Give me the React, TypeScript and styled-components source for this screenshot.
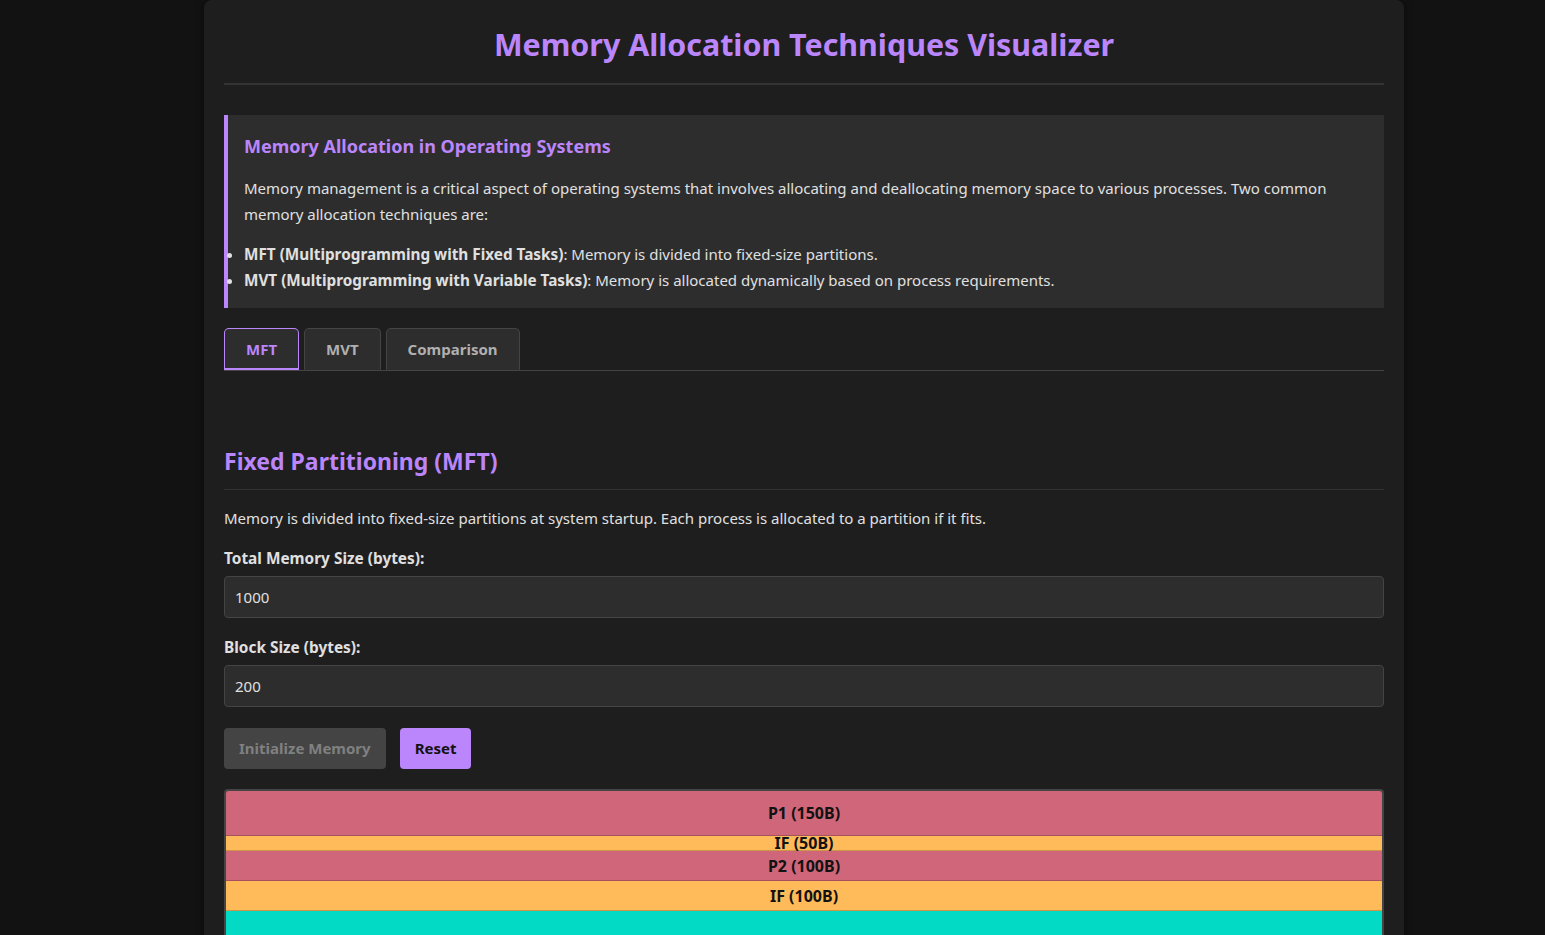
import React from "react";
import styled, { createGlobalStyle } from "styled-components";

const Global = createGlobalStyle`
  html, body { margin: 0; padding: 0; background: #121212; }
  body { font-family: "Noto Sans", "Open Sans", sans-serif; color: #e0e0e0; }
  * { box-sizing: border-box; }
`;

const Container = styled.div`
  width: 1200px;
  margin: 0 0 0 204px;
  padding: 20px;
  background: #1e1e1e;
  border-radius: 8px;
  box-shadow: 0 0 10px rgba(0, 0, 0, 0.4);
  min-height: 935px;
`;

const Title = styled.h1`
  margin: 0 0 30px;
  padding: 5px 0 18px;
  font-size: 30.4px;
  line-height: 40px;
  font-weight: 700;
  text-align: center;
  color: #bb86fc;
  border-bottom: 2px solid #333;
`;

const InfoBox = styled.div`
  background: #2d2d2d;
  border-left: 4px solid #bb86fc;
  padding: 20px 16px 15px;
`;

const InfoTitle = styled.h3`
  margin: 0 0 18px;
  font-size: 18px;
  line-height: 22px;
  font-weight: 700;
  color: #bb86fc;
`;

const Para = styled.p`
  margin: 0 0 14px;
  font-size: 15px;
  line-height: 26px;
  color: #e0e0e0;
`;

const List = styled.ul`
  margin: 0;
  padding: 0;
  font-size: 15px;
  line-height: 26px;

  strong {
    font-size: 15.3px;
  }
`;

const Tabs = styled.div`
  display: flex;
  gap: 5px;
  margin-top: 20px;
  border-bottom: 1px solid #444;
`;

const Tab = styled.button<{ $active?: boolean }>`
  font-family: inherit;
  font-size: 15px;
  font-weight: 700;
  line-height: 20px;
  padding: 10px 21px;
  background: #2d2d2d;
  color: ${(p) => (p.$active ? "#bb86fc" : "#b0b0b0")};
  border: 1px solid ${(p) => (p.$active ? "#bb86fc" : "#444")};
  border-bottom: ${(p) => (p.$active ? "2px solid #bb86fc" : "1px solid #2d2d2d")};
  border-radius: 5px 5px 0 0;
  height: 42px;
  cursor: pointer;
`;

const Section = styled.div`
  padding-top: 75px;
`;

const SectionTitle = styled.h2`
  margin: 0 0 17px;
  padding-bottom: 13px;
  font-size: 23px;
  line-height: 30px;
  font-weight: 700;
  color: #bb86fc;
  border-bottom: 1px solid #333;
`;

const Text = styled.p`
  margin: 0 0 18px;
  font-size: 15px;
  line-height: 22px;
`;

const Field = styled.div`
  display: flex;
  flex-direction: column;
  gap: 6px;
  margin-bottom: 18px;
`;

const Label = styled.label`
  padding-top: 1px;
  font-size: 15.4px;
  line-height: 22px;
  font-weight: 700;
  color: #e0e0e0;
`;

const Input = styled.input`
  width: 100%;
  height: 42px;
  padding: 10px;
  font-family: inherit;
  font-size: 15px;
  line-height: 20px;
  color: #e0e0e0;
  background: #2d2d2d;
  border: 1px solid #444;
  border-radius: 4px;
  outline: none;
`;

const Buttons = styled.div`
  display: flex;
  gap: 14px;
  margin-top: 21px;
  margin-bottom: 20px;
`;

const Button = styled.button<{ $disabled?: boolean }>`
  font-family: inherit;
  font-size: 15px;
  font-weight: 700;
  line-height: 21px;
  height: 41px;
  padding: 10px 15px;
  border: none;
  border-radius: 4px;
  background: ${(p) => (p.$disabled ? "#444" : "#bb86fc")};
  color: ${(p) => (p.$disabled ? "#808080" : "#121212")};
  cursor: ${(p) => (p.$disabled ? "not-allowed" : "pointer")};
`;

const MemoryBar = styled.div`
  border: 2px solid #444;
  border-radius: 4px;
  display: flex;
  flex-direction: column;
  overflow: hidden;
`;

const Block = styled.div<{ $kind: "proc" | "frag" | "free" }>`
  display: flex;
  align-items: center;
  justify-content: center;
  font-size: 16px;
  font-weight: 700;
  color: #121212;
  border-bottom: 1px solid rgba(0, 0, 0, 0.2);
  background: ${(p) =>
    p.$kind === "proc" ? "#cf6679" : p.$kind === "frag" ? "#ffbb5a" : "#03dac6"};
  white-space: nowrap;
`;

const blocks: { label: string; size: number; kind: "proc" | "frag" | "free" }[] = [
  { label: "P1 (150B)", size: 150, kind: "proc" },
  { label: "IF (50B)", size: 50, kind: "frag" },
  { label: "P2 (100B)", size: 100, kind: "proc" },
  { label: "IF (100B)", size: 100, kind: "frag" },
  { label: "Block 3 (Free)", size: 200, kind: "free" },
  { label: "Block 4 (Free)", size: 200, kind: "free" },
  { label: "Block 5 (Free)", size: 200, kind: "free" },
];

export default function App() {
  return (
    <>
      <Global />
      <Container>
        <Title>Memory Allocation Techniques Visualizer</Title>
        <InfoBox>
          <InfoTitle>Memory Allocation in Operating Systems</InfoTitle>
          <Para>
            Memory management is a critical aspect of operating systems that involves allocating and
            deallocating memory space to various processes. Two common memory allocation techniques are:
          </Para>
          <List>
            <li>
              <strong>MFT (Multiprogramming with Fixed Tasks)</strong>: Memory is divided into fixed-size
              partitions.
            </li>
            <li>
              <strong>MVT (Multiprogramming with Variable Tasks)</strong>: Memory is allocated dynamically
              based on process requirements.
            </li>
          </List>
        </InfoBox>
        <Tabs>
          <Tab $active>MFT</Tab>
          <Tab>MVT</Tab>
          <Tab>Comparison</Tab>
        </Tabs>
        <Section>
          <SectionTitle>Fixed Partitioning (MFT)</SectionTitle>
          <Text>
            Memory is divided into fixed-size partitions at system startup. Each process is allocated to a
            partition if it fits.
          </Text>
          <Field>
            <Label>Total Memory Size (bytes):</Label>
            <Input defaultValue="1000" />
          </Field>
          <Field>
            <Label>Block Size (bytes):</Label>
            <Input defaultValue="200" />
          </Field>
          <Buttons>
            <Button $disabled>Initialize Memory</Button>
            <Button>Reset</Button>
          </Buttons>
          <MemoryBar>
            {blocks.map((b, i) => (
              <Block key={i} $kind={b.kind} style={{ height: b.size * 0.3 }}>
                {b.label}
              </Block>
            ))}
          </MemoryBar>
        </Section>
      </Container>
    </>
  );
}
